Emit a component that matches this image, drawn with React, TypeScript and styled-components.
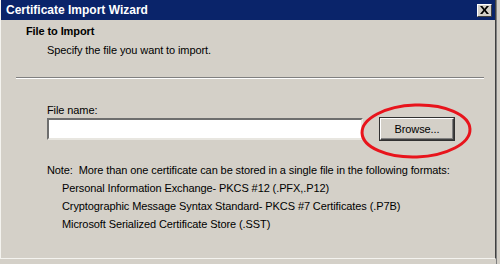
import styled, { createGlobalStyle } from "styled-components"

const GlobalStyle = createGlobalStyle`
  html, body {
    margin: 0;
    padding: 0;
    background: #d4d0c8;
  }
  body {
    width: 500px;
    height: 264px;
    overflow: hidden;
    font-family: "Liberation Sans", Arial, sans-serif;
    font-size: 11px;
    letter-spacing: -0.1px;
    color: #000;
  }
`

const formats = [
  "Personal Information Exchange- PKCS #12 (.PFX,.P12)",
  "Cryptographic Message Syntax Standard- PKCS #7 Certificates (.P7B)",
  "Microsoft Serialized Certificate Store (.SST)",
]

export default function App() {
  return (
    <>
      <GlobalStyle />
      <Desktop>
        <Window>
          <TitleBar>
            <Title>Certificate Import Wizard</Title>
            <CloseButton aria-label="Close">
              <svg width="9" height="8" viewBox="0 0 9 8">
                <path d="M0 0h2.3l2.2 2.7L6.7 0H9L5.7 4 9 8H6.7L4.5 5.3 2.3 8H0l3.3-4z" fill="#000" />
              </svg>
            </CloseButton>
          </TitleBar>
          <Header>
            <HeaderTitle>File to Import</HeaderTitle>
            <HeaderText>Specify the file you want to import.</HeaderText>
          </Header>
          <Separator />
          <Body>
            <Label>File name:</Label>
            <FieldRow>
              <TextField />
              <Button>Browse...</Button>
              <Highlight width="114" height="58" viewBox="0 0 114 58">
                <ellipse cx="57" cy="29" rx="54" ry="26" fill="none" stroke="#e8141c" strokeWidth="3"
                  transform="rotate(-2 57 29)" />
              </Highlight>
            </FieldRow>
            <Note>Note:&nbsp; More than one certificate can be stored in a single file in the following formats:</Note>
            <FormatList>
              {formats.map(f => <FormatItem key={f}>{f}</FormatItem>)}
            </FormatList>
          </Body>
        </Window>
        <BehindWindow />
      </Desktop>
    </>
  )
}

const Desktop = styled.div`
  display: flex;
  width: 500px;
  height: 264px;
`

const Window = styled.div`
  width: 496px;
  height: 259px;
  background: #d4d0c8;
  border-left: 1px solid #f4f3ef;
  border-right: 1px solid #404040;
  border-bottom: 1px solid #f4f3ef;
  box-sizing: border-box;
`

const BehindWindow = styled.div`
  flex: 1;
  background: #d4d0c8;
  border-left: 1px solid #808080;
`

const TitleBar = styled.div`
  display: flex;
  align-items: center;
  justify-content: space-between;
  height: 20px;
  padding: 0 3px 0 5px;
  background: #0a246a;
`

const Title = styled.span`
  color: #fff;
  font-weight: bold;
  font-size: 12px;
  letter-spacing: 0;
`

const CloseButton = styled.div`
  display: flex;
  align-items: center;
  justify-content: center;
  width: 15px;
  height: 13px;
  box-sizing: border-box;
  background: #d4d0c8;
  border: 1px solid;
  border-color: #fff #404040 #404040 #fff;
`

const Header = styled.div`
  padding: 4px 0 20px 25px;
`

const HeaderTitle = styled.div`
  font-weight: bold;
  line-height: 15px;
`

const HeaderText = styled.div`
  padding-left: 21px;
  margin-top: 4px;
  line-height: 14px;
`

const Separator = styled.div`
  margin: 0 11px 0 15px;
  border-top: 1px solid #808080;
  border-bottom: 1px solid #ffffff;
`

const Body = styled.div`
  padding: 24px 0 0 46px;
`

const Label = styled.div`
  line-height: 14px;
`

const FieldRow = styled.div`
  position: relative;
  display: flex;
  gap: 17px;
  margin-top: 1px;
`

const TextField = styled.div`
  width: 316px;
  height: 22px;
  box-sizing: border-box;
  background: #fff;
  border: 2px solid;
  border-color: #6e6e6e #e8e6e0 #e8e6e0 #6e6e6e;
`

const Button = styled.div`
  display: flex;
  align-items: center;
  justify-content: center;
  width: 74px;
  height: 22px;
  box-sizing: border-box;
  border: 1px solid #404040;
  border-top-color: #fff;
  border-left-color: #fff;
  box-shadow: inset -1px -1px 0 #808080, 0 0 0 1px #303030;
  background: #d4d0c8;
`

const Highlight = styled.svg`
  position: absolute;
  left: 312px;
  top: -16px;
  pointer-events: none;
`

const Note = styled.div`
  margin-top: 23px;
  line-height: 14px;
`

const FormatList = styled.div`
  display: flex;
  flex-direction: column;
  gap: 4px;
  margin-top: 4px;
  padding-left: 15px;
`

const FormatItem = styled.div`
  line-height: 14px;
`
